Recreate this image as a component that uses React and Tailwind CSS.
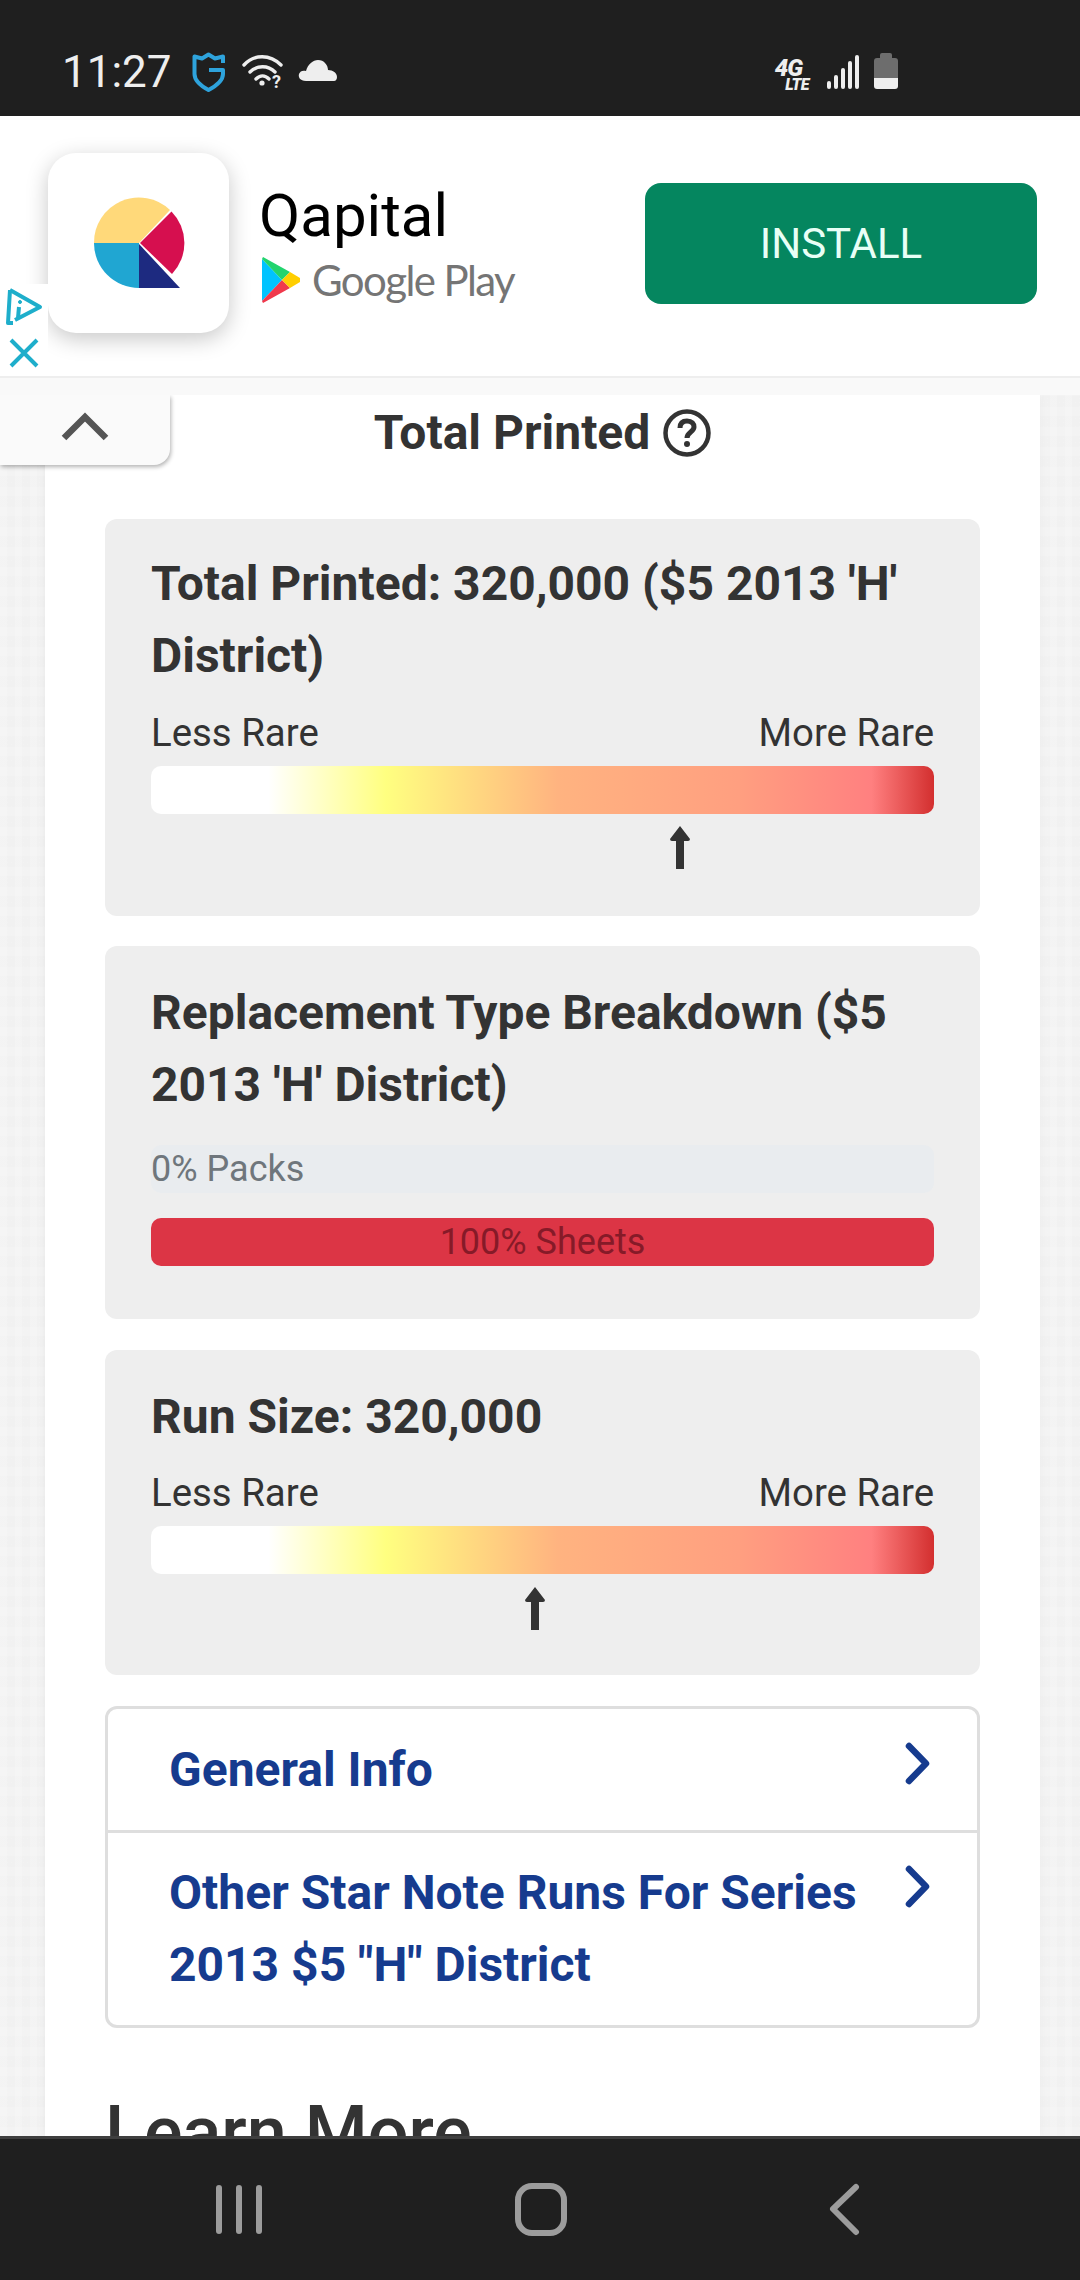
import React from 'react';

function StatusBar() {
  return (
    <div className="h-[116px] shrink-0 bg-[#1f1f1f] flex items-start pl-[62px] text-[#eeeeee]">
      <span className="text-[44px] leading-[52px] mt-[46px] w-[130px]">11:27</span>
      {/* guard shield */}
      <svg width="34" height="40" viewBox="0 0 34 40" className="mt-[52px]" fill="none" stroke="#2ea3dc" strokeWidth="4" strokeLinejoin="round">
        <path d="M31 11 L31 4.5 L23 6.5 L16.5 2.5 L10 6.5 L2.5 4.5 L2.5 22 C2.5 29 9 34 16.5 38 C24 34 31 29 31 22 L31 18 L17 18" />
      </svg>
      <svg width="44" height="40" viewBox="0 0 44 40" className="mt-[53px] ml-[16px]" fill="none" stroke="#eeeeee" strokeWidth="3.4" strokeLinecap="round">
        <path d="M2 12 C12 1 28 1 39 12" />
        <path d="M8 19 C15 12 26 12 33 19" />
        <path d="M14 26 C18 22 23 22 27 26" />
        <circle cx="20" cy="30" r="2.6" fill="#eeeeee" stroke="none" />
        <text x="30" y="35" fontSize="18" fontWeight="700" fill="#eeeeee" stroke="none" fontFamily="Roboto, sans-serif">?</text>
      </svg>
      <svg width="40" height="24" viewBox="0 0 40 24" className="mt-[59px] ml-[12px]" fill="#eeeeee">
        <path d="M8 22 C2 22 0 18 1 15 C2 12 5 11 8 12 C10 5 15 1 20 1 C26 1 30 6 30 11 C35 11 39 14 39 18 C39 20 38 22 36 22 Z" />
      </svg>
      <div className="ml-auto flex items-start mr-[182px]">
        <div className="mt-[59px] w-[38px] text-right italic font-black leading-none">
          <div className="text-[24px] tracking-[-1px] leading-[19px] pr-[7px]">4G</div>
          <div className="text-[16px] leading-[13px] tracking-[-0.5px]">LTE</div>
        </div>
        <div className="mt-[55px] ml-[18px] flex items-end gap-[3px] h-[34px]">
          <div className="w-[4px] h-[8px] bg-[#eeeeee] rounded-full" />
          <div className="w-[4px] h-[14px] bg-[#eeeeee] rounded-full" />
          <div className="w-[4px] h-[21px] bg-[#eeeeee] rounded-full" />
          <div className="w-[4px] h-[28px] bg-[#eeeeee] rounded-full" />
          <div className="w-[4px] h-[34px] bg-[#eeeeee] rounded-full" />
        </div>
        <div className="mt-[53px] ml-[15px] w-[24px] flex flex-col items-center">
          <div className="w-[12px] h-[5px] bg-[#6d6d6d] rounded-t-[2px]" />
          <div className="w-[24px] h-[20px] bg-[#6d6d6d] rounded-t-[3px]" />
          <div className="w-[24px] h-[11px] bg-[#eeeeee] rounded-b-[3px]" />
        </div>
      </div>
    </div>
  );
}

function AdBanner() {
  return (
    <div className="relative h-[262px] shrink-0 bg-white flex items-start border-b-2 border-[#eeeeee]">
      <div className="ml-[48px] mt-[37px] w-[181px] h-[180px] rounded-[28px] bg-white shadow-[0_6px_22px_rgba(0,0,0,0.22)] flex items-center justify-center">
        <svg width="92" height="92" viewBox="0 0 92 92">
          <path d="M1 46 A45 45 0 0 1 77 13 L46 46 Z" fill="#ffd97a" />
          <path d="M78.5 14.5 A45 45 0 0 1 79 77 L47 46 Z" fill="#d60f4f" />
          <path d="M1 46 L46 46 L46 91 A45 45 0 0 1 1 46 Z" fill="#20a6d2" />
          <path d="M46 47 L46 91 L87 91 Z" fill="#1d2a80" />
        </svg>
      </div>
      <div className="ml-[30px] mt-[65px]">
        <div className="text-[60px] leading-[70px] text-black">Qapital</div>
        <div className="flex items-center mt-[6px]">
          <svg width="38" height="46" viewBox="0 0 38 46" className="ml-[3px]">
            <path d="M0 2 L0 44 L20 23 Z" fill="#00c3ff" />
            <path d="M0 2 L1 0 L28 15 L20 23 Z" fill="#22d46e" />
            <path d="M0 44 L1 46 L28 31 L20 23 Z" fill="#f0394c" />
            <path d="M28 15 L38 21 Q39 23 38 25 L28 31 L20 23 Z" fill="#ffce00" />
          </svg>
          <span className="ml-[12px] text-[42px] leading-[46px] tracking-[-1.6px] text-[#757575] font-['Lato',sans-serif]">Google Play</span>
        </div>
      </div>
      <div className="ml-auto mr-[43px] mt-[67px] w-[392px] h-[121px] rounded-[16px] bg-[#05865f] flex items-center justify-center text-[42px] text-[#e8fff6]">
        INSTALL
      </div>
      {/* ad choices patch */}
      <div className="absolute left-0 bottom-0 w-[48px] h-[92px] bg-white flex flex-col items-center">
        <svg width="38" height="40" viewBox="0 0 38 40" className="mt-[3px]" fill="none" stroke="#1eaecb" strokeWidth="4" strokeLinejoin="round">
          <path d="M5 3 L35 20 L10 33" />
          <path d="M5 3 L3 36 L8 36" />
          <path d="M14 20 L13 31" />
          <circle cx="15" cy="15" r="1.5" fill="#1eaecb" strokeWidth="1" />
        </svg>
        <svg width="30" height="30" viewBox="0 0 30 30" className="mt-[11px]" stroke="#1eaecb" strokeWidth="4">
          <path d="M2 2 L28 28 M28 2 L2 28" />
        </svg>
      </div>
    </div>
  );
}

function RarityBar({ arrow }) {
  return (
    <>
      <div className="flex justify-between text-[38.4px] leading-[48px] text-[#333333]">
        <span>Less Rare</span>
        <span>More Rare</span>
      </div>
      <div className="mt-[9px] h-[48px] rounded-[10px] bg-[linear-gradient(to_right,#ffffff_15%,#ffff80_30%,#ffb380_52%,#ff9f80_75%,#ff8080_92%,#d32f2f_100%)]" />
      <div className={arrow}>
        <svg width="22" height="43" viewBox="0 0 22 43" className="block">
          <path d="M11 0 L21 13 Q21 15 19 15 L15 15 L15 43 L7 43 L7 15 L3 15 Q1 15 1 13 Z" fill="#333333" />
        </svg>
      </div>
    </>
  );
}

function Chevron() {
  return (
    <svg width="27" height="43" viewBox="0 0 27 43" className="shrink-0 mt-[8px]" fill="none" stroke="#163b8e" strokeWidth="6.5" strokeLinecap="round" strokeLinejoin="round">
      <path d="M5 4 L22 21.5 L5 39" />
    </svg>
  );
}

function Content() {
  return (
    <div className="relative flex-1 min-h-0 overflow-hidden bg-[#f3f3f3] bg-[repeating-linear-gradient(90deg,rgba(255,255,255,0.12)_0px,rgba(255,255,255,0.12)_7px,rgba(0,0,0,0.004)_7px,rgba(0,0,0,0.004)_15px),repeating-linear-gradient(0deg,rgba(255,255,255,0.12)_0px,rgba(255,255,255,0.12)_9px,rgba(0,0,0,0.004)_9px,rgba(0,0,0,0.004)_20px)]">
      <div className="ml-[45px] w-[995px] h-full bg-white px-[60px] rounded-tl-[16px] shadow-[0_0_6px_rgba(0,0,0,0.05)]">
        <div className="h-[124px] pt-[11px] flex justify-center items-start text-[48px] leading-[54px] font-bold text-[#333333]">
          <span>Total Printed</span>
          <svg width="48" height="48" viewBox="0 0 48 48" className="ml-[13px] mt-[3px]" fill="none" stroke="#333333" strokeWidth="4.5">
            <circle cx="24" cy="24" r="21.5" />
            <path d="M17 19 C17 14 20 12 24 12 C29 12 31 15 31 18 C31 23 24 23 24 29" strokeWidth="5" />
            <circle cx="24" cy="35" r="3" fill="#333333" stroke="none" />
          </svg>
        </div>

        <div className="h-[397px] rounded-[12px] bg-[#eeeeee] px-[46px] pt-[29px]">
          <h2 className="text-[48px] leading-[72px] font-bold text-[#333333]">Total Printed: 320,000 ($5 2013 'H' District)</h2>
          <div className="mt-[17px]">
            <RarityBar arrow="mt-[12px] pl-[518px]" />
          </div>
        </div>

        <div className="mt-[30px] h-[373px] rounded-[12px] bg-[#eeeeee] px-[46px] pt-[31px]">
          <h2 className="text-[48px] leading-[72px] font-bold text-[#333333]">Replacement Type Breakdown ($5 2013 'H' District)</h2>
          <div className="mt-[24px] h-[48px] rounded-[10px] bg-[#e9ecef] text-[36px] leading-[48px] text-[#6f767c]">0% Packs</div>
          <div className="mt-[25px] h-[48px] rounded-[10px] bg-[#dc3545] text-[36px] leading-[48px] text-center text-[#861a28]">100% Sheets</div>
        </div>

        <div className="mt-[31px] h-[325px] rounded-[12px] bg-[#eeeeee] px-[46px] pt-[31px]">
          <h2 className="text-[48px] leading-[72px] font-bold text-[#333333]">Run Size: 320,000</h2>
          <div className="mt-[16px]">
            <RarityBar arrow="mt-[13px] pl-[373px]" />
          </div>
        </div>

        <div className="mt-[31px] h-[322px] rounded-[12px] border-[3px] border-[#dedede] font-bold text-[48px] leading-[72px] text-[#163b8e]">
          <div className="h-[124px] border-b-[3px] border-[#dedede] pl-[61px] pr-[46px] pt-[25px] flex justify-between items-start">
            <span>General Info</span>
            <Chevron />
          </div>
          <div className="pl-[61px] pr-[46px] pt-[24px] flex justify-between items-start">
            <span className="w-[720px]">Other Star Note Runs For Series 2013 $5 "H" District</span>
            <Chevron />
          </div>
        </div>

        <h1 className="mt-[65px] text-[72px] leading-[80px] font-medium text-[#333333]">Learn More</h1>
      </div>

      {/* collapse tab overlapping the page */}
      <div className="absolute left-0 top-0 w-[170px] h-[70px] bg-[#fafafa] rounded-br-[16px] shadow-[1px_2px_4px_rgba(0,0,0,0.3)] flex justify-center pt-[17px]">
        <svg width="48" height="30" viewBox="0 0 48 30" fill="none" stroke="#555555" strokeWidth="6.5">
          <path d="M3 26 L24 5 L45 26" />
        </svg>
      </div>
    </div>
  );
}

function NavBar() {
  return (
    <div className="h-[144px] shrink-0 bg-[#1f1f1f] border-t-[3px] border-[#3f3f3f] flex items-start">
      <div className="ml-[216px] mt-[46px] flex gap-[14px]">
        <div className="w-[6px] h-[49px] rounded-full bg-[#9c9c9c]" />
        <div className="w-[6px] h-[49px] rounded-full bg-[#9c9c9c]" />
        <div className="w-[6px] h-[49px] rounded-full bg-[#9c9c9c]" />
      </div>
      <div className="ml-[253px] mt-[44px] w-[52px] h-[53px] rounded-[17px] border-[6px] border-[#9c9c9c]" />
      <svg width="32" height="53" viewBox="0 0 32 53" className="ml-[261px] mt-[44px]" fill="none" stroke="#9c9c9c" strokeWidth="6" strokeLinecap="round" strokeLinejoin="round">
        <path d="M28 4 L5 26 L28 49" />
      </svg>
    </div>
  );
}

export default function App() {
  return (
    <div className="w-[1080px] h-[2280px] flex flex-col overflow-hidden font-['Roboto',sans-serif]">
      <StatusBar />
      <AdBanner />
      <div className="h-[17px] shrink-0 bg-[#f9f9f9]" />
      <Content />
      <NavBar />
    </div>
  );
}
